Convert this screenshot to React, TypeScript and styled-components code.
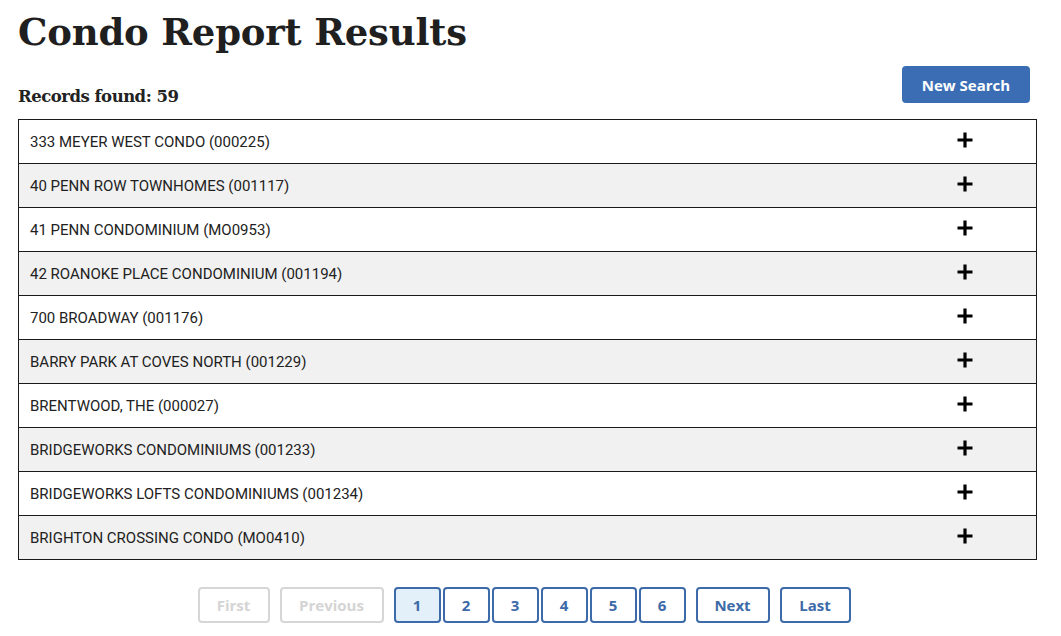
import styled, { createGlobalStyle } from 'styled-components';

const GlobalStyle = createGlobalStyle`
  html, body {
    margin: 0;
    padding: 0;
    background: #ffffff;
  }
  body {
    font-family: "Source Sans Pro", Roboto, "Liberation Sans", sans-serif;
    color: #212121;
  }
`;

const records = [
  '333 MEYER WEST CONDO (000225)',
  '40 PENN ROW TOWNHOMES (001117)',
  '41 PENN CONDOMINIUM (MO0953)',
  '42 ROANOKE PLACE CONDOMINIUM (001194)',
  '700 BROADWAY (001176)',
  'BARRY PARK AT COVES NORTH (001229)',
  'BRENTWOOD, THE (000027)',
  'BRIDGEWORKS CONDOMINIUMS (001233)',
  'BRIDGEWORKS LOFTS CONDOMINIUMS (001234)',
  'BRIGHTON CROSSING CONDO (MO0410)',
];

const PlusIcon = () => (
  <svg width="18" height="18" viewBox="0 0 18 18" aria-hidden="true">
    <path d="M9 1.5v15M1.5 9h15" stroke="#000" strokeWidth="3.2" fill="none" />
  </svg>
);

export default function App() {
  return (
    <>
      <GlobalStyle />
      <Page>
        <Title>Condo Report Results</Title>
        <TopBar>
          <Count>Records found: 59</Count>
          <SearchButton>New Search</SearchButton>
        </TopBar>
        <Table>
          {records.map((name, i) => (
            <Row key={name} striped={i % 2 === 1}>
              <NameCell>{name}</NameCell>
              <ToggleCell>
                <PlusIcon />
              </ToggleCell>
            </Row>
          ))}
        </Table>
        <Pager>
          <PagerGroup>
            <PageButton disabled wide={72}>First</PageButton>
            <PageButton disabled wide={104}>Previous</PageButton>
          </PagerGroup>
          <Numbers>
            {[1, 2, 3, 4, 5, 6].map((n) => (
              <PageButton key={n} active={n === 1} wide={47}>
                {n}
              </PageButton>
            ))}
          </Numbers>
          <PagerGroup>
            <PageButton wide={74}>Next</PageButton>
            <PageButton wide={71}>Last</PageButton>
          </PagerGroup>
        </Pager>
      </Page>
    </>
  );
}

const Page = styled.div`
  padding: 0 24px 0 18px;
`;

const Title = styled.h1`
  margin: 0;
  padding-top: 8px;
  font-family: "DejaVu Serif", "Liberation Serif", serif;
  font-weight: 700;
  font-size: 37px;
  line-height: 48px;
  color: #1f1f1f;
  letter-spacing: -0.2px;
`;

const TopBar = styled.div`
  display: flex;
  justify-content: space-between;
  align-items: flex-end;
  padding: 10px 7px 15px 0;
`;

const Count = styled.div`
  font-family: "DejaVu Serif", "Liberation Serif", serif;
  font-weight: 700;
  font-size: 16.5px;
  line-height: 20px;
  letter-spacing: -0.5px;
  color: #222;
  margin-bottom: -3px;
`;

const SearchButton = styled.button`
  width: 128px;
  height: 37px;
  border: none;
  border-radius: 4px;
  background: #3a6db4;
  color: #fff;
  font-family: "Source Sans Pro", "Open Sans", sans-serif;
  font-weight: 700;
  font-size: 15px;
  margin-bottom: 1px;
`;

const Table = styled.div`
  border: 1px solid #1a1a1a;
  border-bottom: none;
`;

const Row = styled.div<{ striped?: boolean }>`
  display: grid;
  grid-template-columns: 1fr 142px;
  height: 43px;
  border-bottom: 1px solid #1a1a1a;
  background: ${({ striped }) => (striped ? '#f1f1f1' : '#ffffff')};
`;

const NameCell = styled.div`
  display: flex;
  align-items: center;
  padding-left: 11px;
  font-size: 15px;
  color: #222;
`;

const ToggleCell = styled.div`
  display: flex;
  align-items: center;
  justify-content: center;
  padding-bottom: 4px;
`;

const Pager = styled.div`
  display: flex;
  justify-content: center;
  gap: 10px;
  margin-top: 27px;
  padding-right: 7px;
`;

const PagerGroup = styled.div`
  display: flex;
  gap: 10px;
`;

const Numbers = styled.div`
  display: flex;
  gap: 2px;
`;

const PageButton = styled.button<{ active?: boolean; wide: number }>`
  width: ${({ wide }) => wide}px;
  height: 36px;
  border-radius: 4px;
  border: 2px solid ${({ disabled }) => (disabled ? '#d6d6d6' : '#3d6aa8')};
  background: ${({ active }) => (active ? '#e3f0f9' : '#ffffff')};
  color: ${({ disabled }) => (disabled ? '#d4d4d4' : '#3d6aa8')};
  font-family: "Source Sans Pro", "Open Sans", sans-serif;
  font-weight: 700;
  font-size: 15px;
  padding: 0;
`;
